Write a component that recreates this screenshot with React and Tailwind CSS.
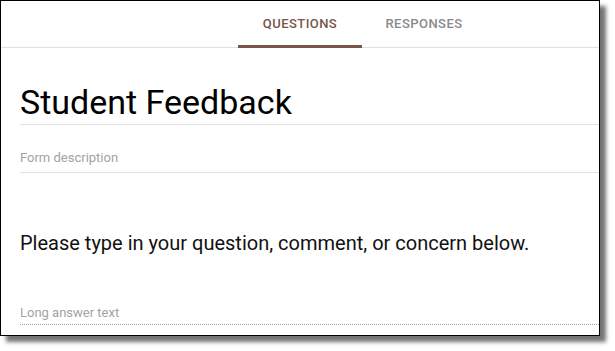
import React from 'react';

const tabs = [
  { label: 'QUESTIONS', active: true },
  { label: 'RESPONSES', active: false },
];

const App = () => {
  return (
    <div className="w-[615px] h-[351px] bg-white overflow-hidden font-['Roboto','Liberation_Sans',sans-serif]">
      {/* screenshot frame with drop shadow */}
      <div className="w-[600px] h-[336px] border border-black bg-white shadow-[6px_6px_4px_rgba(0,0,0,0.55)] flex flex-col overflow-hidden">
        {/* tab header */}
        <div className="h-[47px] shrink-0 border-b border-[#e0e0e0] flex pl-[237px]">
          {tabs.map((tab) => (
            <div
              key={tab.label}
              className={`relative w-[124px] flex items-center justify-center text-[13px] font-medium tracking-[0.45px] ${
                tab.active ? 'text-[#795548]' : 'text-[#8a8a8a]'
              }`}
            >
              {tab.label}
              {tab.active && (
                <div className="absolute left-0 right-0 bottom-[-1px] h-[3px] bg-[#795548]"></div>
              )}
            </div>
          ))}
        </div>

        <div className="pl-[19px]">
          {/* form title */}
          <div className="mt-[34px] pb-[2px] border-b border-[#e0e0e0]">
            <div className="text-[34px] leading-[40px] text-black">Student Feedback</div>
          </div>

          {/* description */}
          <div className="mt-[23px] pb-[4px] border-b border-[#e0e0e0]">
            <div className="text-[13px] leading-[20px] text-[#a3a3a3]">Form description</div>
          </div>

          {/* question */}
          <div className="mt-[56px] text-[20px] leading-[28px] text-[#111]">
            Please type in your question, comment, or concern below.
          </div>

          {/* answer field */}
          <div className="mt-[46px] pb-[1px] border-b border-dotted border-[#9e9e9e]">
            <div className="text-[13px] leading-[20px] text-[#a3a3a3]">Long answer text</div>
          </div>
        </div>
      </div>
    </div>
  );
};

export default App;
